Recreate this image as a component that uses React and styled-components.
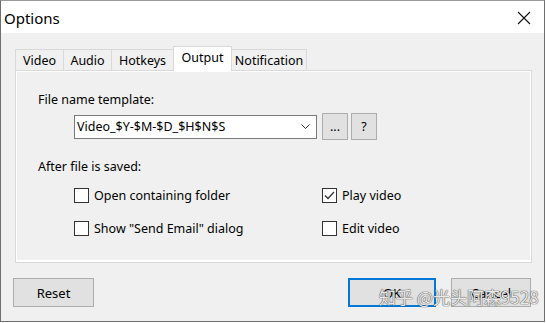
import React from "react";
import styled, { createGlobalStyle } from "styled-components";

const Global = createGlobalStyle`
  html, body { margin: 0; padding: 0; background: #ffffff; }
  body { font-family: "Noto Sans", "Open Sans", sans-serif; }
  * { box-sizing: border-box; }
`;

const Window = styled.div`
  position: relative;
  width: 545px;
  height: 322px;
  border: 1px solid #6f6f6f;
  border-top-color: #9a9a9a;
  background: #f0f0f0;
  display: flex;
  flex-direction: column;
  color: #000;
  font-size: 12px;
  overflow: hidden;
`;

const TitleBar = styled.div`
  height: 32px;
  flex: none;
  background: #ffffff;
  display: flex;
  align-items: center;
  justify-content: space-between;
  padding: 0 13px 0 3px;
`;

const Title = styled.div`
  font-size: 15px;
  line-height: 20px;
  margin-top: 1px;
`;

const Close = styled.div`
  width: 14px;
  height: 14px;
  display: flex;
  margin-top: 1px;
`;

const Body = styled.div`
  display: flex;
  flex-direction: column;
  padding: 13px 12px 0 14px;
`;

const TabStrip = styled.div`
  display: flex;
  align-items: flex-end;
  height: 25px;
  position: relative;
  z-index: 1;
  margin-bottom: -1px;
`;

const Tab = styled.div`
  width: ${(p) => p.$w}px;
  height: ${(p) => (p.$active ? 25 : 22)}px;
  margin-left: ${(p) => (p.$first ? 0 : -1)}px;
  border: 1px solid #d9d9d9;
  border-bottom: ${(p) => (p.$active ? "none" : "1px solid #d9d9d9")};
  background: ${(p) => (p.$active ? "#ffffff" : "#f0f0f0")};
  display: flex;
  align-items: center;
  justify-content: center;
  padding-bottom: ${(p) => (p.$active ? 3 : 0)}px;
  font-size: 12.5px;
  position: relative;
  z-index: ${(p) => (p.$active ? 2 : 1)};
`;

const Panel = styled.div`
  height: 193px;
  border: 1px solid #d9d9d9;
  box-shadow: inset 1px 1px 0 #ffffff, inset -1px -2px 0 #ffffff;
  background: #f0f0f0;
  padding: 20px 0 0 22px;
  display: flex;
  flex-direction: column;
`;

const Label = styled.div`
  font-size: 12.5px;
  line-height: 17px;
`;

const ComboRow = styled.div`
  display: flex;
  align-items: center;
  margin: 5px 0 0 36px;
  height: 27px;
`;

const Combo = styled.div`
  width: 243px;
  height: 24px;
  background: #ffffff;
  border: 1px solid #7a7a7a;
  display: flex;
  align-items: center;
  justify-content: space-between;
  padding: 0 6px 0 2px;
  font-size: 12.5px;
`;

const SmallButton = styled.div`
  width: ${(p) => p.$w}px;
  height: 27px;
  margin-left: ${(p) => p.$ml}px;
  background: #e1e1e1;
  border: 1px solid #adadad;
  display: flex;
  align-items: center;
  justify-content: center;
  font-size: 12.5px;
`;

const SectionLabel = styled(Label)`
  margin-top: 18px;
`;

const CheckGrid = styled.div`
  display: grid;
  grid-template-columns: 248px 200px;
  grid-auto-rows: 33px;
  margin: 4px 0 0 36px;
`;

const CheckItem = styled.div`
  display: flex;
  align-items: center;
  gap: 5px;
  font-size: 12.5px;
`;

const Box = styled.div`
  width: 15px;
  height: 15px;
  border: 1px solid #333333;
  background: #ffffff;
  display: flex;
  align-items: center;
  justify-content: center;
`;

const Footer = styled.div`
  display: flex;
  align-items: center;
  justify-content: space-between;
  padding: 15px 13px 0 12px;
`;

const Button = styled.div`
  width: ${(p) => p.$w}px;
  height: 29px;
  background: #e1e1e1;
  border: ${(p) => (p.$default ? "2px solid #0078d7" : "1px solid #adadad")};
  display: flex;
  align-items: center;
  justify-content: center;
  font-size: 13px;
`;

const RightButtons = styled.div`
  display: flex;
  gap: 15px;
`;

const Watermark = styled.div`
  position: absolute;
  left: 378px;
  top: 285px;
  font-family: "Noto Sans CJK SC", "Noto Sans", sans-serif;
  font-size: 17px;
  line-height: 22px;
  color: rgba(255, 255, 255, 0.9);
  text-shadow: 0 0 1px #444, 0 0 1px #444;
  white-space: nowrap;
  pointer-events: none;
`;

const tabs = [
  { name: "Video", w: 49 },
  { name: "Audio", w: 49 },
  { name: "Hotkeys", w: 63 },
  { name: "Output", w: 59, active: true },
  { name: "Notification", w: 76 },
];

const Check = ({ checked, label }) => (
  <CheckItem>
    <Box>
      {checked && (
        <svg width="13" height="13" viewBox="0 0 13 13">
          <polyline points="2,6.5 5,9.5 11,3" fill="none" stroke="#333" strokeWidth="1.3" />
        </svg>
      )}
    </Box>
    {label}
  </CheckItem>
);

export default function App() {
  return (
    <>
      <Global />
      <Window>
        <TitleBar>
          <Title>Options</Title>
          <Close>
            <svg width="14" height="14" viewBox="0 0 14 14">
              <path d="M1 1 L13 13 M13 1 L1 13" stroke="#111" strokeWidth="1.1" />
            </svg>
          </Close>
        </TitleBar>
        <Body>
          <TabStrip>
            {tabs.map((t, i) => (
              <Tab key={t.name} $w={t.w} $active={t.active} $first={i === 0}>
                {t.name}
              </Tab>
            ))}
          </TabStrip>
          <Panel>
            <Label>File name template:</Label>
            <ComboRow>
              <Combo>
                <span>Video_$Y-$M-$D_$H$N$S</span>
                <svg width="9" height="6" viewBox="0 0 9 6">
                  <polyline points="0.5,0.5 4.5,4.5 8.5,0.5" fill="none" stroke="#333" strokeWidth="1" />
                </svg>
              </Combo>
              <SmallButton $w={26} $ml={5}>...</SmallButton>
              <SmallButton $w={26} $ml={3}>?</SmallButton>
            </ComboRow>
            <SectionLabel>After file is saved:</SectionLabel>
            <CheckGrid>
              <Check label="Open containing folder" />
              <Check checked label="Play video" />
              <Check label={'Show "Send Email" dialog'} />
              <Check label="Edit video" />
            </CheckGrid>
          </Panel>
        </Body>
        <Footer>
          <Button $w={81}>Reset</Button>
          <RightButtons>
            <Button $w={88} $default>OK</Button>
            <Button $w={80}>Cancel</Button>
          </RightButtons>
        </Footer>
        <Watermark>知乎 @光头阿森9528</Watermark>
      </Window>
    </>
  );
}
